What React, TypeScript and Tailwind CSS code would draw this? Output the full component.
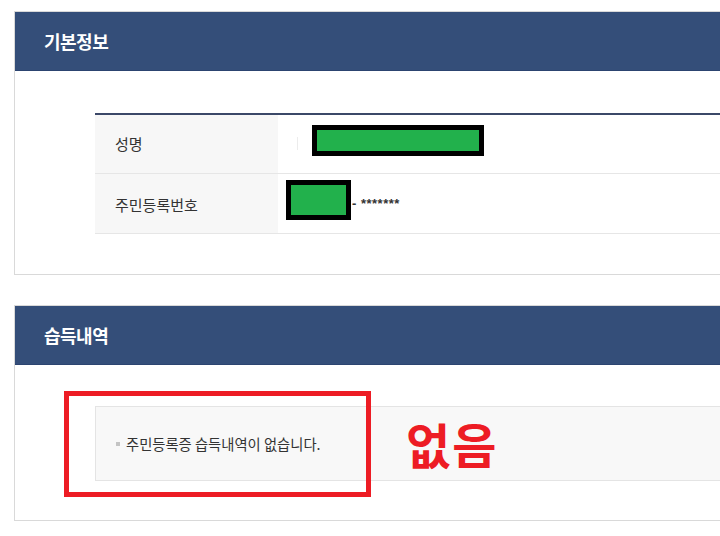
const font = { fontFamily: '"Noto Sans CJK KR", "Noto Sans", sans-serif' };

function Card({ title, children }: { title: string; children: React.ReactNode }) {
  return (
    <section className="ml-[14px] w-[780px] border border-[#d9d9d9] bg-white">
      <header className="flex h-[59px] items-center border-b border-[#2c4470] bg-[#344e79] pl-[29px]">
        <h2 className="text-[18px] font-bold tracking-[-0.5px] text-white">{title}</h2>
      </header>
      {children}
    </section>
  );
}

function Redacted({ w, h }: { w: number; h: number }) {
  return (
    <span
      className="inline-block border-[5px] border-black bg-[#22b14c]"
      style={{ width: w, height: h }}
    />
  );
}

export default function App() {
  return (
    <div className="relative h-[536px] w-[720px] overflow-hidden bg-white pt-[11px]" style={font}>
      <Card title="기본정보">
        <div className="pb-[40px] pl-[80px] pt-[42px]">
          <div className="border-t-2 border-[#3b4868]">
            <div className="flex h-[59px] border-b border-[#e6e6e6]">
              <div className="flex w-[183px] items-center bg-[#f7f7f7] pl-[20px] text-[15px] text-[#333]">
                성명
              </div>
              <div className="flex items-start pt-[10px] pl-[19px]">
                <span className="mr-[14px] mt-[12px] h-[13px] w-px bg-[#ececec]" />
                <Redacted w={172} h={31} />
              </div>
            </div>
            <div className="flex h-[60px] border-b border-[#e6e6e6]">
              <div className="flex w-[183px] items-center bg-[#f7f7f7] pl-[20px] pt-[3px] text-[15px] text-[#333]">
                주민등록번호
              </div>
              <div className="flex items-start pt-[6px] pl-[8px]">
                <Redacted w={65} h={40} />
                <span
                  className="ml-px mt-[14px] text-[13px] font-bold tracking-[0.5px] text-[#333]"
                  style={{ fontFamily: '"Liberation Sans", sans-serif' }}
                >
                  - *******
                </span>
              </div>
            </div>
          </div>
        </div>
      </Card>

      <div className="h-[30px]" />

      <Card title="습득내역">
        <div className="pb-[39px] pl-[80px] pt-[41px]">
          <div className="flex h-[75px] items-center border border-[#e4e4e4] bg-[#f8f8f8] pl-[20px]">
            <span className="mr-[6px] h-[4px] w-[4px] bg-[#c4c4c4]" />
            <span className="text-[14.3px] text-[#333]">주민등록증 습득내역이 없습니다.</span>
          </div>
        </div>
      </Card>

      <div className="pointer-events-none absolute left-[64px] top-[391px] h-[106px] w-[307px] border-[5px] border-[#ed1c24]" />
      <div className="absolute left-[406px] top-[419px] text-[48px] font-bold leading-none tracking-[2px] text-[#ed1c24]">
        없음
      </div>
    </div>
  );
}
